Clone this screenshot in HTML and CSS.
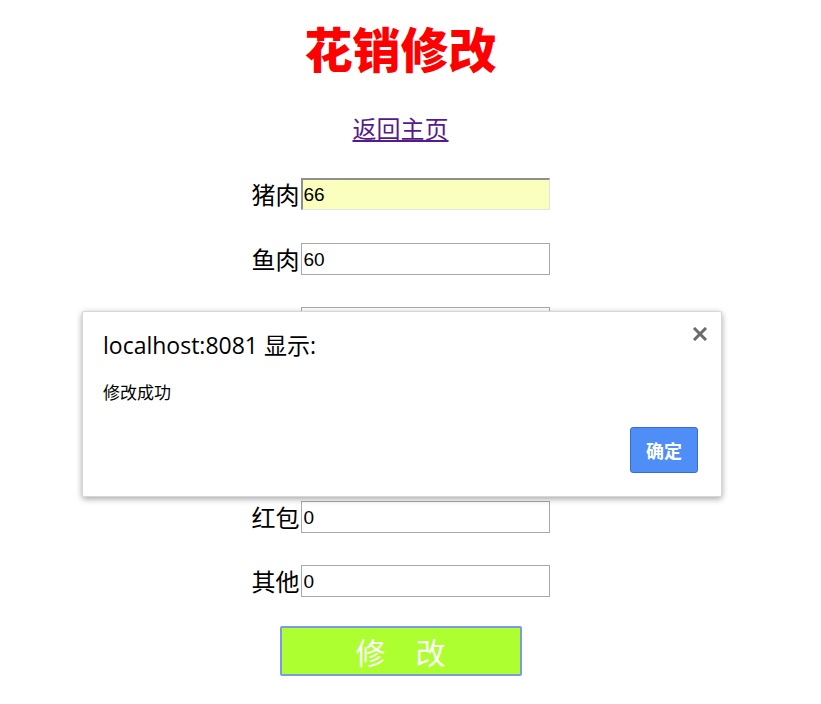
FILE: index.html
```html
<!DOCTYPE html>
<html lang="zh-CN">
<head>
<meta charset="utf-8">
<title>花销修改</title>
<link rel="stylesheet" href="styles.css">
</head>
<body>
<div class="page">
  <h1 class="title">花销修改</h1>
  <a class="back" href="#">返回主页</a>
  <form class="form">
    <div class="row"><label class="label">猪肉</label><input class="field field-focus" type="text" value="66"></div>
    <div class="row"><label class="label">鱼肉</label><input class="field" type="text" value="60"></div>
    <div class="row"><label class="label">牛肉</label><input class="field" type="text" value="0"></div>
    <div class="row"><label class="label">蔬菜</label><input class="field" type="text" value="0"></div>
    <div class="row"><label class="label">水果</label><input class="field" type="text" value="0"></div>
    <div class="row"><label class="label">红包</label><input class="field" type="text" value="0"></div>
    <div class="row"><label class="label">其他</label><input class="field" type="text" value="0"></div>
    <button class="submit" type="button">修　改</button>
  </form>
</div>
<div class="dialog">
  <svg class="dialog-close" width="14" height="14" viewBox="0 0 14 14"><path d="M2 2 L12 12 M12 2 L2 12" stroke="#6b6b6b" stroke-width="3" stroke-linecap="square" fill="none"/></svg>
  <div class="dialog-title">localhost:8081 显示:</div>
  <div class="dialog-msg">修改成功</div>
  <div class="dialog-actions"><button class="dialog-ok" type="button">确定</button></div>
</div>
</body>
</html>
```
FILE: styles.css
```css
html, body {
  margin: 0;
  padding: 0;
  background: #fff;
}
body {
  font-family: "Noto Sans CJK SC", "Liberation Sans", sans-serif;
  color: #000;
}
.page {
  width: 801px;
  display: flex;
  flex-direction: column;
  align-items: center;
}
.title {
  margin: 19px 0 0 0;
  font-size: 48px;
  line-height: 56px;
  font-weight: 900;
  color: #ff0000;
}
.back {
  margin-top: 38px;
  font-size: 24px;
  line-height: 30px;
  color: #551a8b;
  text-decoration: underline;
}
.form {
  margin-top: 35px;
  display: flex;
  flex-direction: column;
  align-items: center;
  gap: 32.5px;
}
.row {
  display: flex;
  align-items: center;
  height: 32px;
}
.label {
  font-size: 24px;
  line-height: 32px;
  margin-right: 1px;
}
.field {
  box-sizing: border-box;
  width: 249px;
  height: 32px;
  margin: 0;
  padding: 2px 2px 0 2px;
  border: 1px solid #a9a9a9;
  font-family: "Liberation Sans", sans-serif;
  font-size: 19px;
  color: #000;
  background: #fff;
  outline: none;
}
.field-focus {
  background: #faffbd;
  border-top: 2px solid #8f8f8f;
  border-left: 2px solid #8f8f8f;
  border-right: 1px solid #e3e3e3;
  border-bottom: 1px solid #e3e3e3;
  padding-left: 1px;
  padding-top: 1px;
}
.submit {
  margin-top: -4px;
  box-sizing: border-box;
  width: 242px;
  height: 50px;
  background: #adff2f;
  border: 2px solid #7b9ae3;
  border-radius: 2px;
  color: #fff;
  font-family: "Noto Sans CJK SC", sans-serif;
  font-size: 30px;
  line-height: 44px;
  padding: 0;
}
.dialog {
  position: absolute;
  left: 82px;
  top: 311px;
  width: 640px;
  height: 186px;
  box-sizing: border-box;
  background: #fff;
  border: 1px solid #d7d7d7;
  border-radius: 2px;
  box-shadow: 0 2px 6px rgba(0,0,0,0.35);
  padding: 17px 20px 0 20px;
  display: flex;
  flex-direction: column;
}
.dialog-close {
  position: absolute;
  right: 14px;
  top: 15px;
}
.dialog-title {
  font-family: "Open Sans", "Noto Sans CJK SC", sans-serif;
  font-size: 23px;
  line-height: 32px;
  color: #000;
}
.dialog-msg {
  margin-top: 20px;
  font-size: 17px;
  line-height: 22px;
}
.dialog-actions {
  margin-top: 24px;
  display: flex;
  justify-content: flex-end;
  padding-right: 3px;
}
.dialog-ok {
  box-sizing: border-box;
  width: 68px;
  height: 46px;
  background: #4f8ef7;
  border: 1px solid #3a6bd0;
  border-radius: 3px;
  color: #fff;
  font-family: "Noto Sans CJK SC", sans-serif;
  font-weight: bold;
  font-size: 18px;
  padding: 0;
}
```
